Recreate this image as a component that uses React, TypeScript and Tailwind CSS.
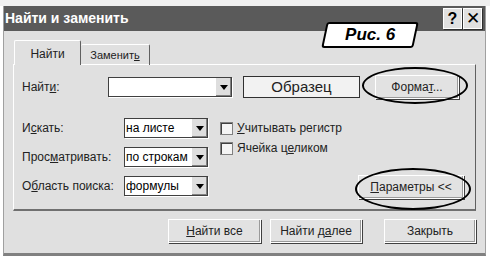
import React from "react";

function Arrow() {
  return (
    <div className="w-[16px] h-full bg-[#dedede] border-l border-[#fff] flex items-center justify-center shadow-[inset_-1px_-1px_0_#808080]">
      <svg width="8" height="5" viewBox="0 0 8 5">
        <path d="M0 0h8L4 5z" fill="#000" />
      </svg>
    </div>
  );
}

function Select({ value, width }: { value: string; width: string }) {
  return (
    <div className={`${width} h-[20px] flex bg-white border border-[#404040] shadow-[1px_1px_0_#fff]`}>
      <div className="flex-1 text-[12px] leading-[18px] pl-[1px] text-black whitespace-nowrap overflow-hidden">{value}</div>
      <Arrow />
    </div>
  );
}

function Btn({ children, w }: { children: React.ReactNode; w: string }) {
  return (
    <div className={`${w} h-[24px] flex items-center justify-center bg-[#e2e2e2] border border-[#fff] shadow-[1px_1px_0_#404040,inset_-1px_-1px_0_#9a9a9a] text-[12px] text-[#222] whitespace-nowrap`}>
      {children}
    </div>
  );
}

function Check({ children }: { children: React.ReactNode }) {
  return (
    <div className="flex items-center gap-[4px] leading-[14px]">
      <div className="w-[13px] h-[13px] bg-[#f4f4f4] border border-[#808080] shadow-[inset_1px_1px_0_#404040]" />
      <span>{children}</span>
    </div>
  );
}

export default function App() {
  return (
    <div className="w-[490px] h-[261px] bg-white relative overflow-hidden font-['Liberation_Sans',sans-serif]">
      <div className="absolute inset-x-0 top-0 h-[6px] bg-[#f0f0f0]" />
      <div className="ml-[3px] mt-[5px] w-[483px] h-[251px] bg-[#e0e0e0] border border-[#a0a0a0] border-b-[3px] border-b-[#808080] flex flex-col">
        {/* title bar */}
        <div className="h-[25px] bg-[#5a5a5a] flex items-center pl-[1px] pr-[3px]">
          <span className="text-white font-bold text-[14px]">Найти и заменить</span>
          <div className="ml-auto flex gap-[1px]">
            <div className="w-[19px] h-[21px] bg-[#e0e0e0] border border-[#fff] shadow-[1px_1px_0_#303030] flex items-center justify-center font-bold text-[16px] text-black">?</div>
            <div className="w-[19px] h-[21px] bg-[#e0e0e0] border border-[#fff] shadow-[1px_1px_0_#303030] flex items-center justify-center text-[17px] text-black">✕</div>
          </div>
        </div>

        <div className="px-[9px] pt-[9px] flex flex-col">
          {/* tabs */}
          <div className="flex items-end h-[25px] relative z-10">
            <div className="w-[67px] h-[25px] border border-[#fff] border-r-[#606060] border-b-0 rounded-t-[2px] bg-[#e0e0e0] flex items-center justify-center text-[12px] text-[#222] pt-[2px] ml-[1px]">
              Найти
            </div>
            <div className="w-[69px] h-[21px] border border-[#fff] border-l-0 border-r-[#606060] border-b-0 rounded-t-[2px] flex items-center justify-center text-[11px] text-[#222]">
              Заменит<span className="underline">ь</span>
            </div>
          </div>
          {/* panel */}
          <div className="h-[147px] -mt-[1px] border border-[#fff] border-r-[#606060] border-b-[2px] border-b-[#707070] pl-[8px] pt-[11px] flex flex-col text-[12px] text-[#222] whitespace-nowrap">
            <div className="flex items-center h-[22px]">
              <div className="w-[86px]">Найт<span className="underline">и</span>:</div>
              <div className="w-[124px] h-[20px] flex bg-white border border-[#404040] shadow-[1px_1px_0_#fff]">
                <div className="flex-1" />
                <Arrow />
              </div>
              <div className="ml-[11px] w-[117px] h-[22px] bg-[#f2f2f2] border border-[#303030] flex items-center justify-center text-[15px] text-[#222]">
                Образец
              </div>
              <div className="ml-[15px]">
                <Btn w="w-[84px]">
                  <span>Форма<span className="underline">т</span>...</span>
                </Btn>
              </div>
            </div>

            <div className="flex items-end mt-[20px]">
              <div className="flex flex-col gap-[9px]">
                <div className="flex items-center">
                  <div className="w-[102px]">И<span className="underline">с</span>кать:</div>
                  <Select value="на листе" width="w-[84px]" />
                </div>
                <div className="flex items-center">
                  <div className="w-[102px]">Прос<span className="underline">м</span>атривать:</div>
                  <Select value="по строкам" width="w-[84px]" />
                </div>
                <div className="flex items-center">
                  <div className="w-[102px]">О<span className="underline">б</span>ласть поиска:</div>
                  <Select value="формулы" width="w-[84px]" />
                </div>
              </div>
              <div className="ml-[12px] self-start mt-[3px] flex flex-col gap-[6px]">
                <Check><span className="underline">У</span>читывать регистр</Check>
                <Check>Ячейка ц<span className="underline">е</span>ликом</Check>
              </div>
              <div className="ml-auto mr-[11px] mb-[-3px]">
                <Btn w="w-[106px]">
                  <span><span className="underline">П</span>араметры &lt;&lt;</span>
                </Btn>
              </div>
            </div>
          </div>

          {/* bottom buttons */}
          <div className="flex justify-end gap-[9px] mt-[8px]">
            <Btn w="w-[93px]"><span><span className="underline">Н</span>айти все</span></Btn>
            <Btn w="w-[92px]"><span>Найти д<span className="underline">а</span>лее</span></Btn>
            <div className="ml-[13px]"><Btn w="w-[92px]">Закрыть</Btn></div>
          </div>
        </div>
      </div>

      {/* annotation label */}
      <div className="absolute left-[324px] top-[22px] w-[92px] h-[26px] -skew-x-[12deg] bg-white border-2 border-black rounded-[3px] flex items-center justify-center">
        <span className="skew-x-[12deg] italic font-bold text-[17px] text-black">Рис. 6</span>
      </div>
      {/* annotation ellipses */}
      <div className="absolute left-[362px] top-[67px] w-[106px] h-[37px] rounded-[50%] border-2 border-black" />
      <div className="absolute left-[355px] top-[168px] w-[116px] h-[42px] rounded-[50%] border-2 border-black" />
    </div>
  );
}
